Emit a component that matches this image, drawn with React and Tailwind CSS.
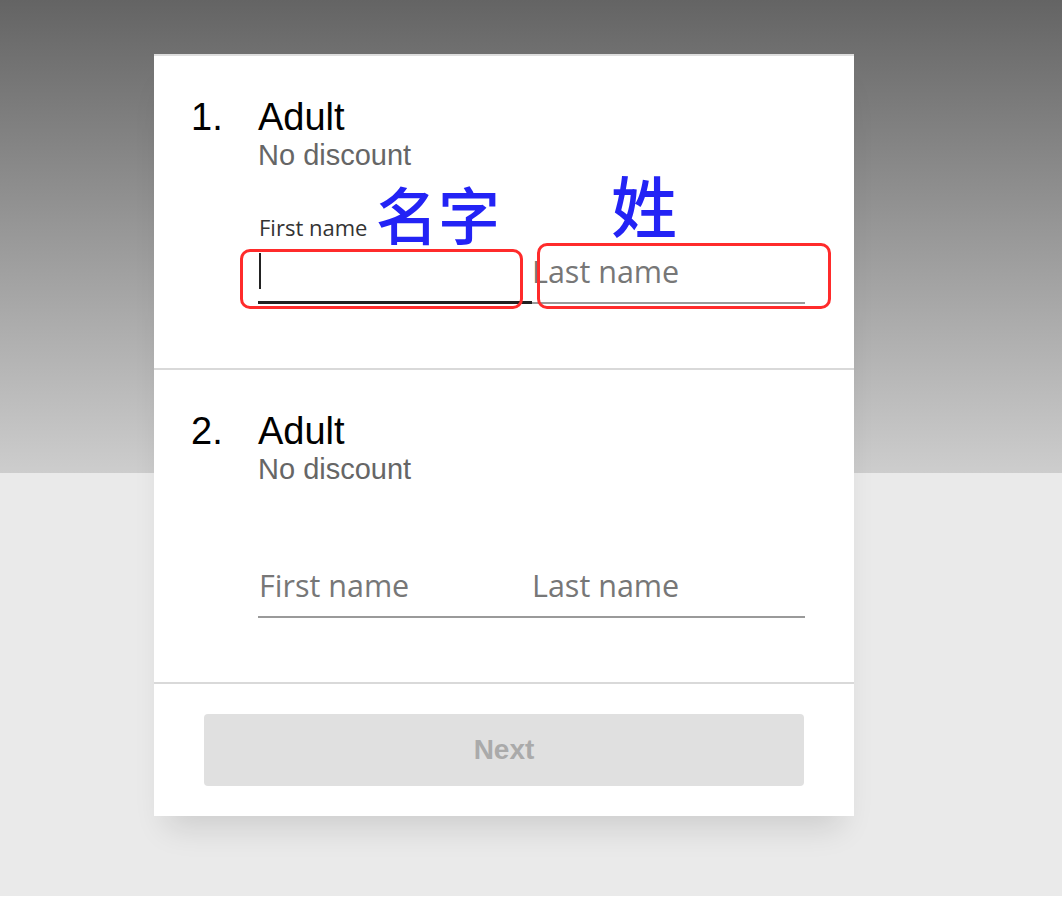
import React from "react";

const sans = { fontFamily: '"Liberation Sans", Arial, sans-serif' };

function Header({ n }) {
  return (
    <div className="w-[68px] shrink-0 text-[38px] leading-[40px] text-black font-['Liberation_Sans',Arial,sans-serif]">
      {n}.
    </div>
  );
}

function Section({ n, focused }) {
  return (
    <section className="flex pl-[37px] pr-[49px] pt-[41px] pb-[64px]">
      <Header n={n} />
      <div className="flex-1 -ml-px">
        <div className="text-[38px] leading-[40px] text-black font-['Liberation_Sans',Arial,sans-serif]">
          Adult
        </div>
        <div className="text-[29px] leading-[36px] text-[#666] font-['Liberation_Sans',Arial,sans-serif]">
          No discount
        </div>
        <div className="mt-[41px] font-['Open_Sans',sans-serif]">
          <div className="flex h-[26px] text-[22px] leading-[26px] text-[#333]">
            {focused ? <span className="pl-px">First name</span> : null}
          </div>
          <div className="flex border-b-2 border-[#9a9a9a]">
            {focused ? (
              <div className="w-[274px] h-[64px] -mb-[2px] border-b-[3px] border-[#222] flex items-end pb-[12px] pl-px">
                <span className="block w-[2px] h-[36px] bg-[#222]" />
              </div>
            ) : (
              <div className="w-[274px] h-[62px] flex items-end pb-[13px] pl-px text-[30.5px] leading-[36px] text-[#777]">
                First name
              </div>
            )}
            <div className="flex-1 h-[62px] flex items-end pb-[13px] text-[30.5px] leading-[36px] text-[#777]">
              Last name
            </div>
          </div>
        </div>
      </div>
    </section>
  );
}

export default function App() {
  return (
    <div className="w-[1062px] h-[902px] overflow-hidden pt-[54px] bg-[linear-gradient(to_bottom,#646464_0px,#cdcdcd_473px,#eaeaea_473px,#eaeaea_896px,#ffffff_896px)]">
      <div className="relative ml-[154px] w-[700px] bg-white border-t-2 border-[#dedede] shadow-[0_24px_30px_-12px_rgba(0,0,0,0.12)]">
        <Section n={1} focused />
        <div className="border-t-2 border-[#d9d9d9]">
          <Section n={2} />
        </div>
        <div className="border-t-2 border-[#d9d9d9] px-[50px] py-[30px]">
          <button
            type="button"
            className="w-full h-[72px] rounded-[4px] bg-[#e0e0e0] flex items-center justify-center text-[28px] leading-[34px] font-bold text-[#aaaaaa]"
            style={sans}
          >
            Next
          </button>
        </div>

        {/* annotations */}
        <div className="absolute left-[86px] top-[193px] w-[283px] h-[60px] border-[3px] border-[#ff2b2b] rounded-[10px]" />
        <div className="absolute left-[383px] top-[187px] w-[294px] h-[66px] border-[3px] border-[#ff2b2b] rounded-[10px]" />
        <div className="absolute left-[222px] top-[126px] text-[62px] leading-[62px] font-medium text-[#2323f5] font-['Noto_Sans_CJK_SC',sans-serif] whitespace-nowrap">
          名字
        </div>
        <div className="absolute left-[457px] top-[114px] text-[66px] leading-[66px] font-medium text-[#2323f5] font-['Noto_Sans_CJK_SC',sans-serif] whitespace-nowrap">
          姓
        </div>
      </div>
    </div>
  );
}
